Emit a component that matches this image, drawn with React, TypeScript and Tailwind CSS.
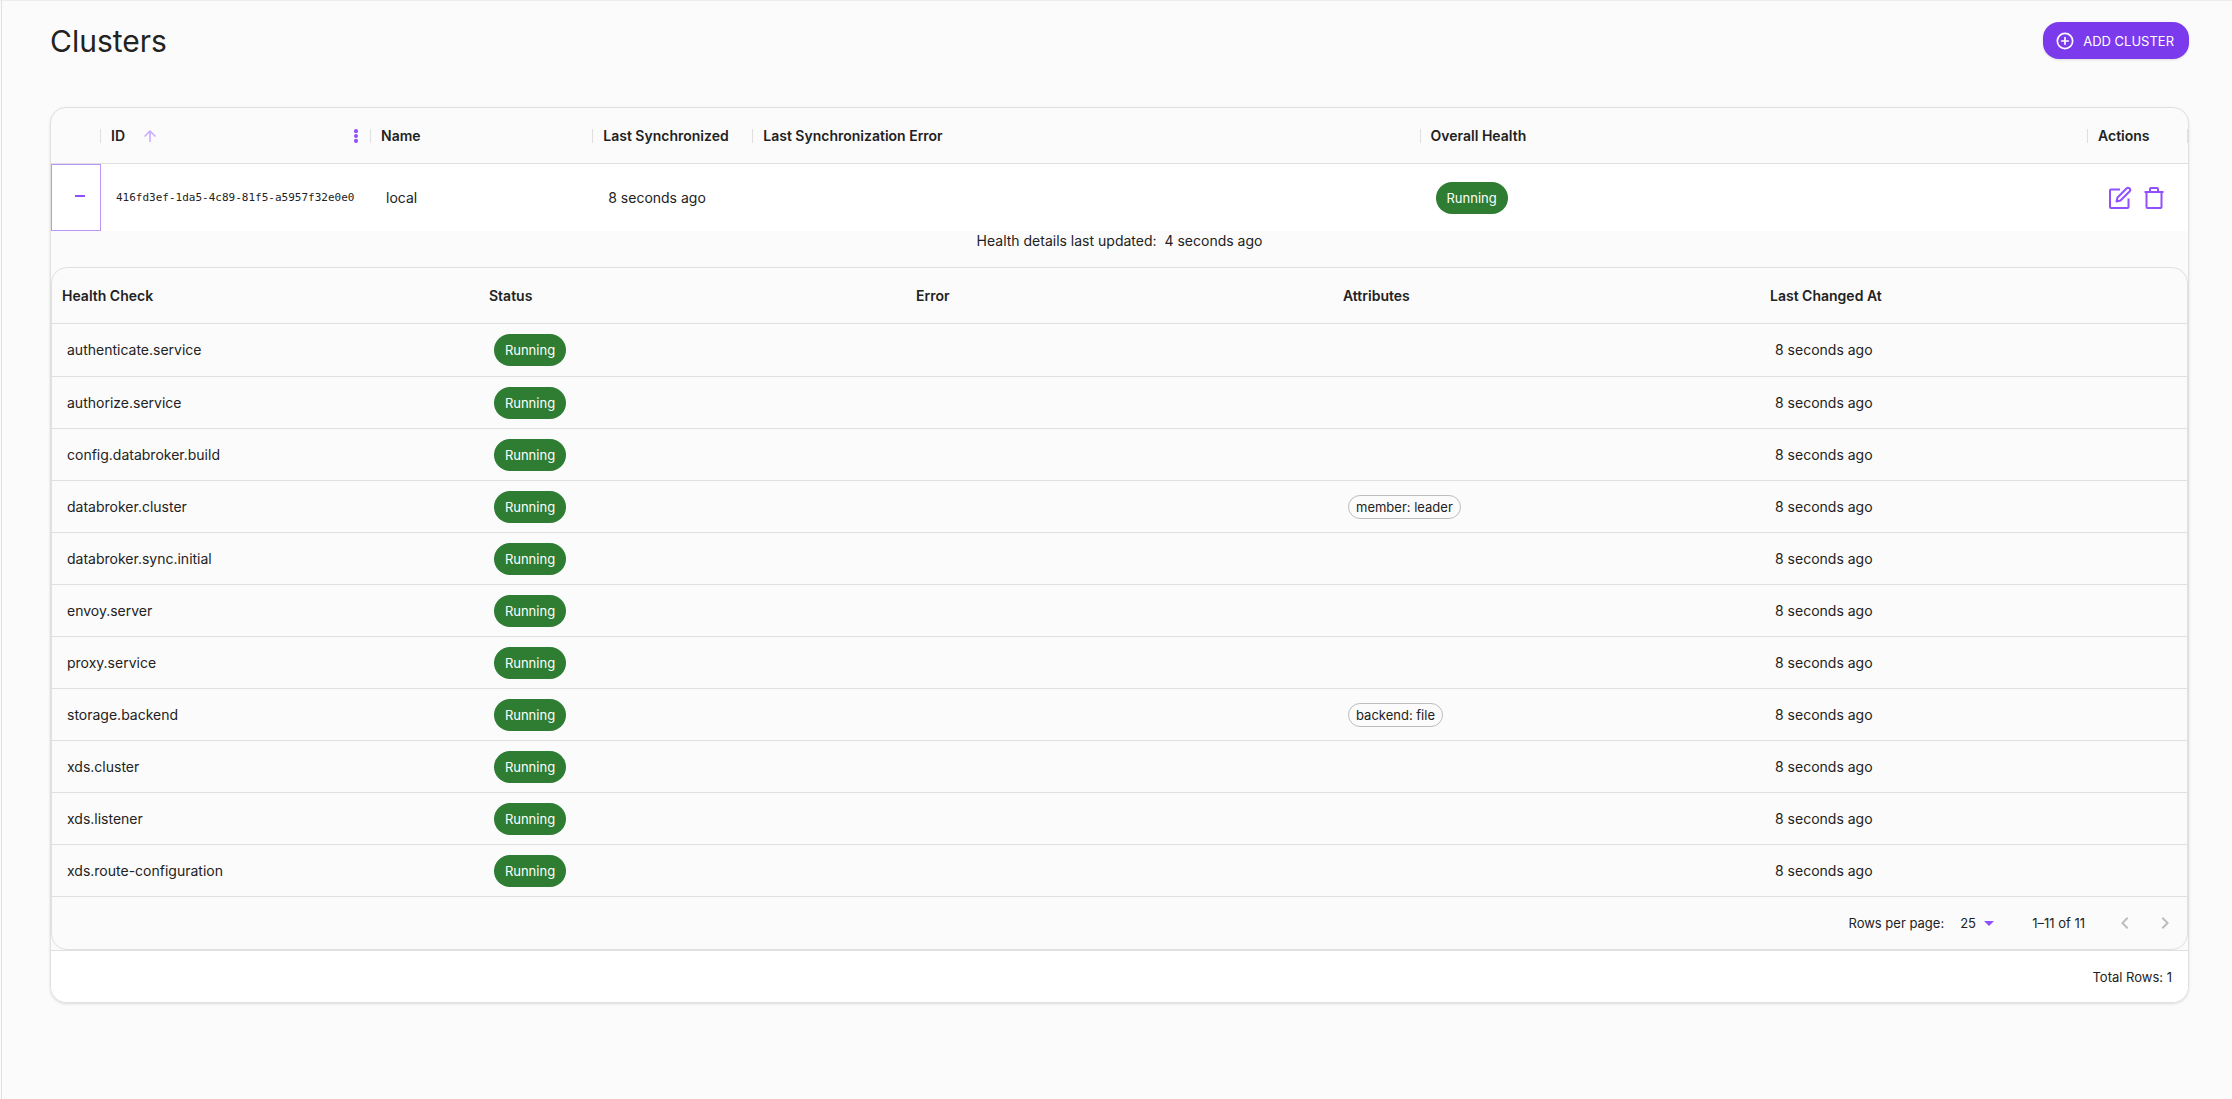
import { useState } from "react";

interface HealthCheck {
  name: string;
  attribute?: string;
}

const checks: HealthCheck[] = [
  { name: "authenticate.service" },
  { name: "authorize.service" },
  { name: "config.databroker.build" },
  { name: "databroker.cluster", attribute: "member: leader" },
  { name: "databroker.sync.initial" },
  { name: "envoy.server" },
  { name: "proxy.service" },
  { name: "storage.backend", attribute: "backend: file" },
  { name: "xds.cluster" },
  { name: "xds.listener" },
  { name: "xds.route-configuration" },
];

const healthColumns = ["Health Check", "Status", "Error", "Attributes", "Last Changed At"];

function StatusChip() {
  return (
    <span className="inline-flex h-8 w-[72px] items-center justify-center rounded-2xl bg-[#2e7d32] align-middle text-[13px] text-white">
      Running
    </span>
  );
}

function HeaderCell({ label, children }: { label?: string; children?: React.ReactNode }) {
  return (
    <th scope="col" className="h-14 border-b border-[#e0e0e0] p-0 font-semibold">
      <div className="flex h-[14px] items-center border-r border-[#e0e0e0] pl-[10px]">
        {label}
        {children}
      </div>
    </th>
  );
}

function HealthTable() {
  const [pageSize, setPageSize] = useState("25");
  return (
    <div className="rounded-2xl border border-[#e0e0e0]">
      <table className="w-full table-fixed border-separate border-spacing-0 text-left">
        <thead>
          <tr>
            {healthColumns.map((c) => (
              <th key={c} scope="col" className="h-14 border-b border-[#e0e0e0] px-[10px] py-0 font-semibold">
                {c}
              </th>
            ))}
          </tr>
        </thead>
        <tbody className="[&>tr+tr>td]:border-t [&>tr>td]:border-[#e0e0e0]">
          {checks.map((c) => (
            <tr key={c.name}>
              <td className="h-[52px] px-[15px] py-0">{c.name}</td>
              <td className="px-[15px] py-0">
                <StatusChip />
              </td>
              <td />
              <td className="px-[15px] py-0">
                {c.attribute && (
                  <span className="inline-flex h-6 items-center rounded-xl border border-[#bdbdbd] px-[7px] align-middle text-[13px]">
                    {c.attribute}
                  </span>
                )}
              </td>
              <td className="px-[15px] py-0">8 seconds ago</td>
            </tr>
          ))}
        </tbody>
      </table>
      <div className="flex h-[53px] items-center justify-end border-t border-[#e0e0e0] pr-0.5 text-[13px]">
        <label htmlFor="page-size">Rows per page:</label>
        <div className="relative mr-[38px] ml-4">
          <select
            id="page-size"
            value={pageSize}
            onChange={(e) => setPageSize(e.target.value)}
            className="w-[34px] appearance-none bg-transparent outline-none"
          >
            <option>25</option>
            <option>50</option>
            <option>100</option>
          </select>
          <svg viewBox="0 0 10 5" className="pointer-events-none absolute top-2 right-0 h-[5px] w-[10px] fill-[#9050ff]">
            <path d="M0 0h10L5 5z" />
          </svg>
        </div>
        <span className="mr-5">1–11 of 11</span>
        <button aria-label="Previous page" disabled className="flex size-10 items-center justify-center text-[#bdbdbd]">
          <svg viewBox="0 0 24 24" className="size-6 fill-current">
            <path d="M15.41 7.41 14 6l-6 6 6 6 1.41-1.41L10.83 12z" />
          </svg>
        </button>
        <button aria-label="Next page" disabled className="flex size-10 items-center justify-center text-[#bdbdbd]">
          <svg viewBox="0 0 24 24" className="size-6 fill-current">
            <path d="M10 6 8.59 7.41 13.17 12l-4.58 4.59L10 18l6-6z" />
          </svg>
        </button>
      </div>
    </div>
  );
}

export default function App() {
  const [expanded, setExpanded] = useState(true);
  return (
    <div className="min-h-screen border-t border-[#ececec] bg-[#fbfbfb] pl-px font-['Inter',sans-serif] text-sm leading-5 text-[#222]">
      <main className="min-h-screen border-l border-[#e0e0e0] pt-[21px] pr-[43px] pl-12">
        <div className="mb-12 flex items-center justify-between">
          <h1 className="text-[30px] leading-9">Clusters</h1>
          <button className="flex h-[37px] items-center gap-2 rounded-2xl bg-[#7c3aed] pr-[15px] pl-3 text-[13px] text-white shadow-sm">
            <svg viewBox="0 0 24 24" className="size-5 fill-none stroke-current stroke-2">
              <circle cx="12" cy="12" r="9.200" />
              <path strokeLinecap="round" d="M12 8v8M8 12h8" />
            </svg>
            ADD CLUSTER
          </button>
        </div>

        <section className="rounded-2xl border border-[#e0e0e0] shadow-sm">
          <table className="w-full table-fixed border-separate border-spacing-0 text-left">
            <colgroup>
              <col className="w-[50px]" />
              <col className="w-[270px]" />
              <col className="w-[10.4%]" />
              <col className="w-[160px]" />
              <col />
              <col />
              <col className="w-[100px]" />
            </colgroup>
            <thead>
              <tr>
                <HeaderCell />
                <HeaderCell label="ID">
                  <svg viewBox="0 0 24 24" className="ml-4 size-[18px] fill-[#c9a6ff]">
                    <path d="m4 12 1.41 1.41L11 7.83V20h2V7.83l5.58 5.59L20 12l-8-8-8 8z" />
                  </svg>
                  <button aria-label="ID column menu" className="mr-[5px] ml-auto">
                    <svg viewBox="0 0 24 24" className="size-[18px] fill-[#9050ff]">
                      <circle cx="12" cy="5.500" r="2.700" />
                      <circle cx="12" cy="12" r="2.700" />
                      <circle cx="12" cy="18.500" r="2.700" />
                    </svg>
                  </button>
                </HeaderCell>
                <HeaderCell label="Name" />
                <HeaderCell label="Last Synchronized" />
                <HeaderCell label="Last Synchronization Error" />
                <HeaderCell label="Overall Health" />
                <HeaderCell label="Actions" />
              </tr>
            </thead>
            <tbody>
              <tr className="bg-white">
                <td className="h-[67px] p-0">
                  <button
                    aria-label="Toggle details"
                    aria-expanded={expanded}
                    onClick={() => setExpanded(!expanded)}
                    className="flex h-[67px] w-full items-center justify-center border border-[#bb95f7] pb-1 pl-2"
                  >
                    <span className="h-0.5 w-[10px] bg-[#9050ff]" />
                  </button>
                </td>
                <td className="px-[15px] py-0 font-['DejaVu_Sans_Mono',monospace] text-[11px]">
                  416fd3ef-1da5-4c89-81f5-a5957f32e0e0
                </td>
                <td className="px-[15px] py-0">local</td>
                <td className="px-[15px] py-0">8 seconds ago</td>
                <td />
                <td className="px-[15px] py-0">
                  <StatusChip />
                </td>
                <td className="p-0">
                  <div className="flex gap-[10px] pl-5 text-[#9050ff]">
                    <button aria-label="Edit cluster">
                      <svg viewBox="0 0 24 24" className="size-6 fill-none stroke-current stroke-2">
                        <path strokeLinejoin="round" d="M12 3.500H3a1 1 0 0 0-1 1V21a1 1 0 0 0 1 1h16.500a1 1 0 0 0 1-1v-8.500" />
                        <path strokeLinejoin="round" d="M18.500 2.500a2.121 2.121 0 0 1 3 3L12.500 14.500l-4 1 1-4z" />
                      </svg>
                    </button>
                    <button aria-label="Delete cluster">
                      <svg viewBox="0 0 24 24" className="size-6 fill-none stroke-current stroke-2">
                        <path strokeLinejoin="round" d="M2.500 6h19M4.500 6v15a1 1 0 0 0 1 1h13a1 1 0 0 0 1-1V6M8 6V3a1 1 0 0 1 1-1h6a1 1 0 0 1 1 1v3" />
                      </svg>
                    </button>
                  </div>
                </td>
              </tr>
              {expanded && (
                <tr>
                  <td colSpan={7} className="p-0">
                    <p className="mb-4 text-center">
                      Health details last updated: <span className="ml-1">4 seconds ago</span>
                    </p>
                    <HealthTable />
                  </td>
                </tr>
              )}
            </tbody>
          </table>
          <div className="flex h-[52px] items-center justify-end rounded-b-2xl border-t border-[#e0e0e0] bg-white pr-4 text-[13px]">
            Total Rows: 1
          </div>
        </section>
      </main>
    </div>
  );
}
